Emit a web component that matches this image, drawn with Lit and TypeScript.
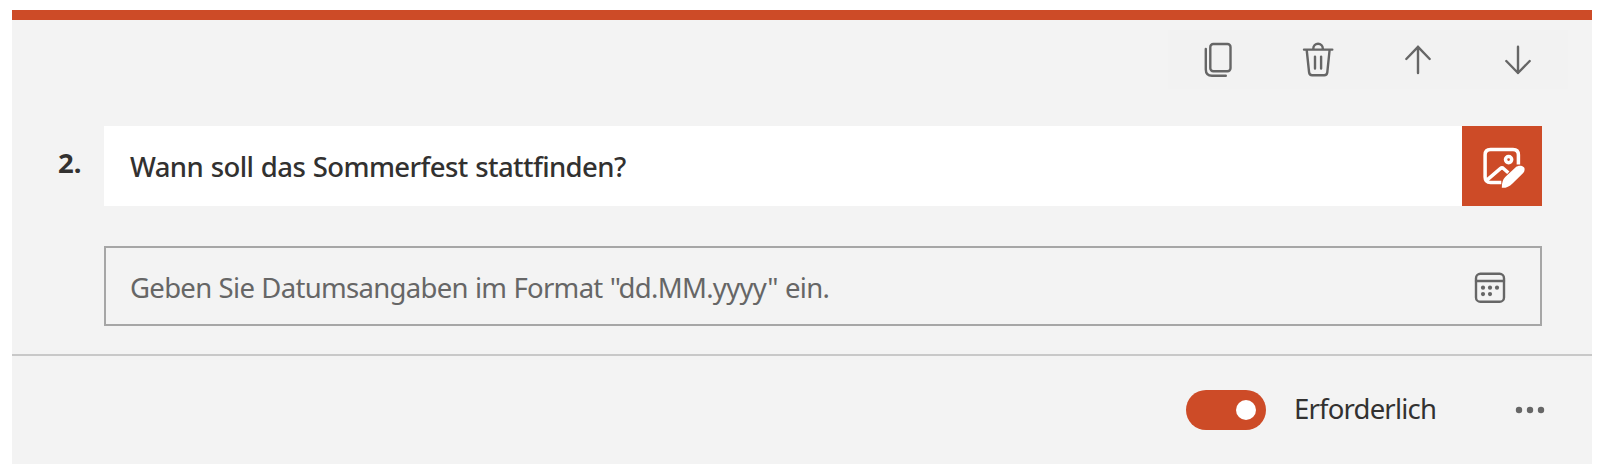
import { LitElement, html, css } from "lit";
import { customElement, property, state } from "lit/decorators.js";
import { classMap } from "lit/directives/class-map.js";

@customElement("question-toggle")
class QuestionToggle extends LitElement {
  @property({ type: Boolean }) on = false;

  static styles = css`
    :host { display: block; }
    .track {
      box-sizing: border-box; display: flex; align-items: center;
      width: 80px; height: 40px; padding: 0 10px; border: 0; border-radius: 20px;
      background: #8a8886;
    }
    .on { background: #cd4b27; justify-content: flex-end; }
    .knob { width: 20px; height: 20px; border-radius: 50%; background: #fff; }
  `;

  render() {
    return html`<button class=${classMap({ track: true, on: this.on })} role="switch"
      aria-checked=${this.on} @click=${() => this.dispatchEvent(new CustomEvent("toggle"))}>
      <span class="knob"></span></button>`;
  }
}

@customElement("app-root")
class AppRoot extends LitElement {
  @state() private required = true;

  static styles = css`
    :host {
      display: block; box-sizing: border-box; height: 476px; padding: 10px 12px 12px;
      background: #fff; font-family: "Noto Sans", "Open Sans", sans-serif; color: #323130;
    }
    .card {
      box-sizing: border-box; display: flex; flex-direction: column; height: 454px;
      border-top: 10px solid #cd4b27; background: #f3f3f3;
    }
    .tools {
      display: flex; align-self: flex-end; margin: 10px 24px 0 0;
      width: 400px; height: 59px; background: #f2f2f2;
    }
    svg { display: block; fill: none; stroke: #666; stroke-width: 2.4; stroke-linecap: round; stroke-linejoin: round; }
    .tool { flex: 1; height: 60px; }
    .question { display: flex; height: 80px; margin: 37px 50px 0 0; }
    .number {
      box-sizing: border-box; width: 92px; padding-left: 46px; line-height: 74px;
      font-size: 27.5px; font-weight: 700;
    }
    .title {
      flex: 1; padding-left: 26px; background: #fff; line-height: 81px;
      font-size: 27.5px; font-weight: 500; white-space: nowrap;
      letter-spacing: -0.6px; word-spacing: 1px;
    }
    .media { width: 80px; height: 80px; background: #cd4b27; }
    .media svg { stroke: #fff; stroke-width: 3.5; }
    .date {
      box-sizing: border-box; display: flex; justify-content: space-between;
      height: 80px; margin: 40px 50px 0 92px; padding-left: 24px;
      border: 2px solid #a6a6a6; color: #666;
    }
    .hint { line-height: 79px; font-size: 27.5px; white-space: nowrap; letter-spacing: -0.7px; word-spacing: 0.7px; }
    .calendar { width: 100px; height: 76px; }
    svg .dots { fill: #666; stroke: none; }
    .footer {
      box-sizing: border-box; display: flex; align-items: center; flex: 1;
      margin-top: 28px; padding-right: 47px; border-top: 2px solid #c8c8c8;
    }
    .switch { display: flex; align-items: center; margin-left: auto; }
    .label { width: 211px; margin-left: 28px; padding-bottom: 2px; font-size: 27.5px; line-height: 38px; letter-spacing: -0.8px; }
    .more { width: 40px; height: 40px; }
  `;

  render() {
    return html`
      <section class="card">
        <div class="tools">
          <svg class="tool" viewBox="1168 30 100 60">
            <rect x="1210.3" y="44" width="20.2" height="27.2" rx="3"/>
            <path d="M1205.8 49V69.5Q1205.8 75.7 1212 75.7H1225.8"/>
          </svg>
          <svg class="tool" viewBox="1268 30 100 60">
            <path d="M1304 49.6H1332.3M1313.3 49V48.5A4.75 4.75 0 0 1 1322.8 48.5V49M1306.7 50L1309.1 72.4Q1309.4 75.3 1312.2 75.3H1324.2Q1327 75.3 1327.3 72.4L1329.6 50M1315 56.6V68.6M1321.1 56.6V68.6"/>
          </svg>
          <svg class="tool" viewBox="1368 30 100 60">
            <path d="M1418 73V46.8M1406.3 59L1418 46.8L1429.7 59"/>
          </svg>
          <svg class="tool" viewBox="1468 30 100 60">
            <path d="M1518 46.8V73M1506.3 61L1518 73L1529.7 61"/>
          </svg>
        </div>
        <div class="question">
          <div class="number">2.</div>
          <div class="title">Wann soll das Sommerfest stattfinden?</div>
          <div class="media">
            <svg viewBox="1462 126 80 80">
              <path stroke-linecap="butt" d="M1518.4 164.6V154.8Q1518.4 149.4 1513 149.4H1490.5Q1485.1 149.4 1485.1 154.8V177Q1485.1 182.4 1490.5 182.4H1501.3"/>
              <path stroke-linecap="butt" d="M1486 180.8L1500.3 168.7Q1502 167.2 1503.7 168.7L1508.3 172.7"/>
              <circle cx="1508.6" cy="159.6" r="3.1"/>
              <path fill="#fff" stroke="none" d="M1501.8 187.8Q1501.6 180.6 1505.2 177L1515.7 167.2C1519 164.2 1525.7 165.8 1524.5 170.2C1524.3 171.8 1523.2 173.1 1521.7 174.6L1512.5 183.4Q1507.5 188.4 1501.8 187.8Z"/>
            </svg>
          </div>
        </div>
        <div class="date">
          <span class="hint">Geben Sie Datumsangaben im Format "dd.MM.yyyy" ein.</span>
          <svg class="calendar" viewBox="1440 248 100 76">
            <rect x="1476" y="273.8" width="28" height="28" rx="4.4"/>
            <path d="M1476 281H1504"/>
            <g class="dots">
              <circle cx="1483" cy="287.7" r="2.1"/><circle cx="1490" cy="287.7" r="2.1"/><circle cx="1497" cy="287.7" r="2.1"/>
              <circle cx="1483" cy="294.1" r="2.1"/><circle cx="1490" cy="294.1" r="2.1"/>
            </g>
          </svg>
        </div>
        <div class="footer">
          <div class="switch">
            <question-toggle .on=${this.required} @toggle=${() => { this.required = !this.required; }}></question-toggle>
            <span class="label">Erforderlich</span>
          </div>
          <svg class="more" viewBox="0 0 40 40">
            <g class="dots"><circle cx="14" cy="20" r="3.2"/><circle cx="25" cy="20" r="3.2"/><circle cx="36" cy="20" r="3.2"/></g>
          </svg>
        </div>
      </section>`;
  }
}
